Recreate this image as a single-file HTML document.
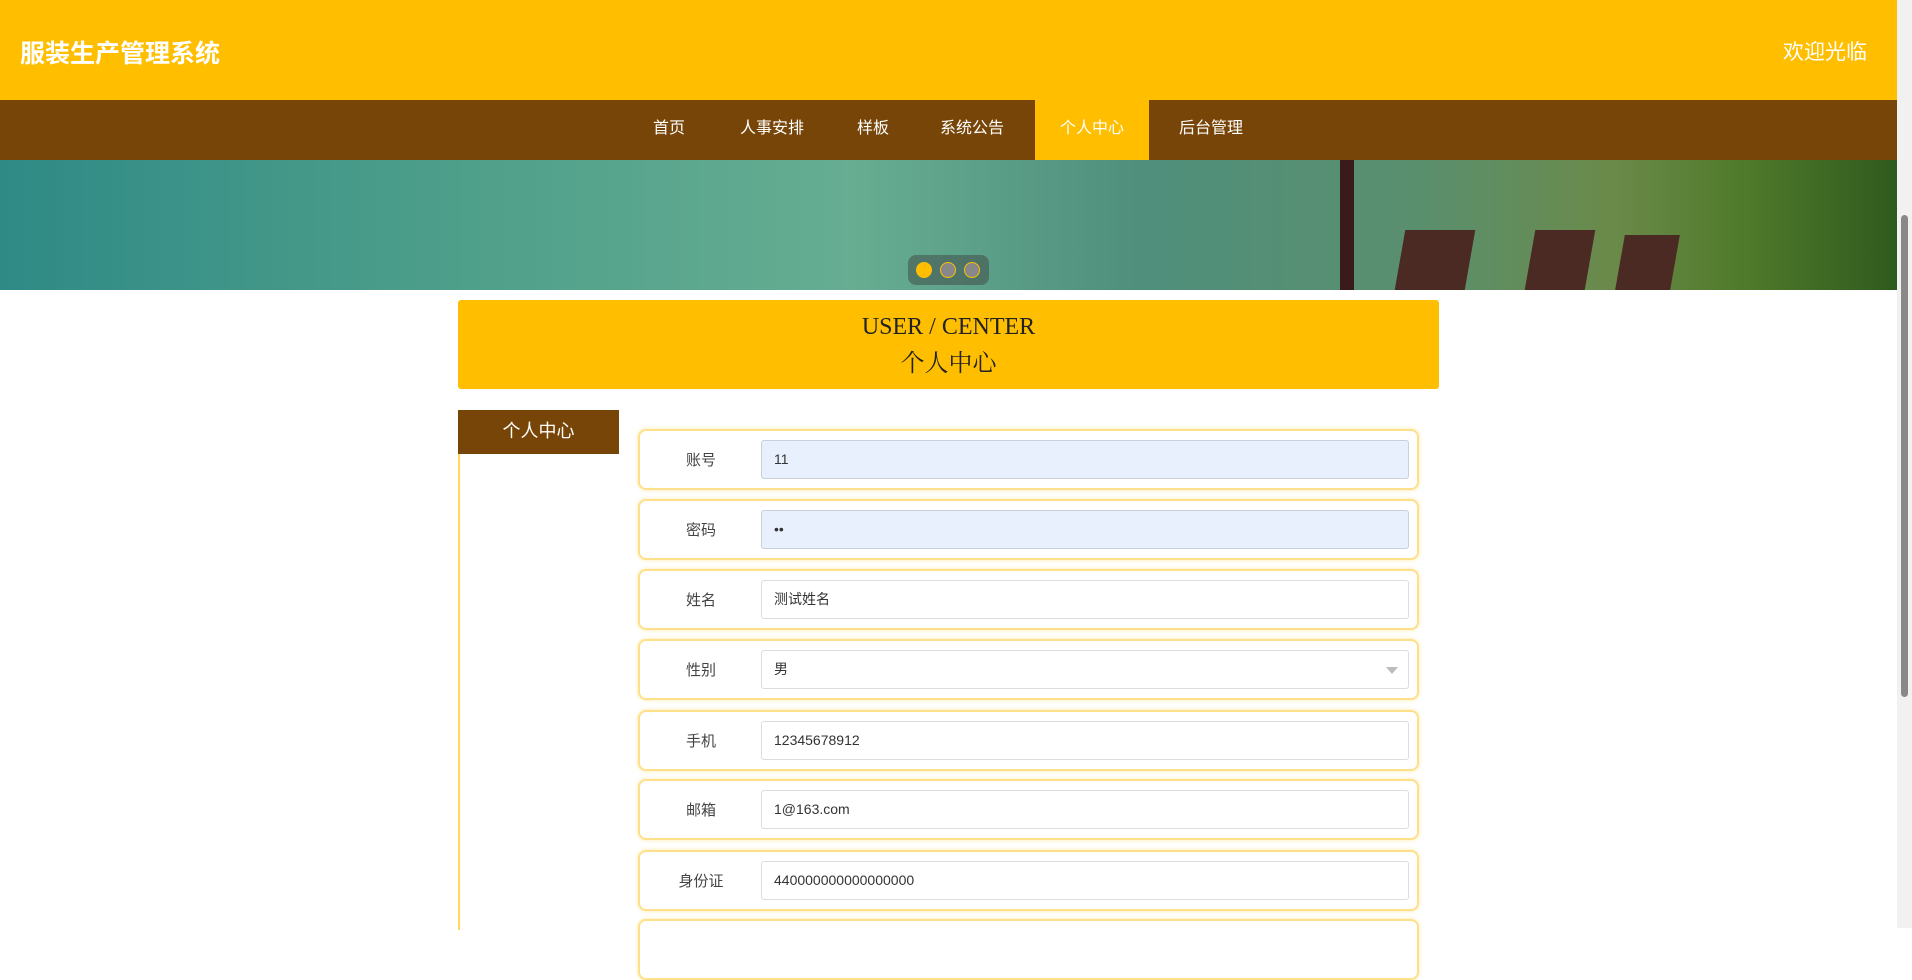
<!DOCTYPE html>
<html><head><meta charset="utf-8"><style>
*{margin:0;padding:0;box-sizing:border-box}
body{width:1912px;height:928px;overflow:hidden;background:#fff;font-family:"Liberation Sans","Noto Sans CJK SC",sans-serif;position:relative}
.hdr{position:absolute;left:0;top:0;width:1897px;height:100px;background:#FFBF00;color:#fff}
.hdr .t{position:absolute;left:20px;top:34px;font-size:25px;font-weight:bold}
.hdr .w{position:absolute;right:30px;top:36px;font-size:21px}
.nav{position:absolute;left:0;top:100px;width:1897px;height:60px;background:#774508}
.nav span{position:absolute;top:0;height:60px;line-height:58px;color:#fff;font-size:16px;transform:translateX(-50%)}
.nav .act{background:#FFBF00;width:114px;text-align:center;transform:none}
.ban{position:absolute;left:0;top:160px;width:1897px;height:130px;background:linear-gradient(90deg,#2f8a86 0%,#4fa08a 25%,#66ad92 45%,#4f8f7c 60%,#5a8f6e 75%,#6b8a4a 85%,#4f7a2a 92%,#2f5a1e 100%);overflow:hidden}
.dots{position:absolute;left:908px;top:255px;width:81px;height:30px;background:rgba(60,60,60,.45);border-radius:8px}
.dots i{position:absolute;top:7px;width:16px;height:16px;border-radius:50%;background:#888;border:1px solid #FFBF00}
.ttl{position:absolute;left:458px;top:300px;width:981px;height:89px;background:#FFBF00;border-radius:3px;text-align:center;font-family:"Liberation Serif","Noto Serif CJK SC",serif;color:#222}
.side{position:absolute;left:458px;top:410px;width:161px;height:520px;border-left:2px solid #FFD75a}
.side .h{height:44px;background:#774508;color:#fff;font-size:18px;text-align:center;line-height:42px;margin-left:-2px}
.row{position:absolute;left:638px;width:781px;height:61px;border:2px solid #FFE08a;border-radius:8px;box-shadow:0 0 4px #FFE9a8;background:#fff}
.row .l{position:absolute;left:0;width:122px;text-align:center;top:18px;font-size:15px;color:#444}
.row .i{position:absolute;left:121px;top:9px;width:648px;height:39px;border:1px solid #ddd;border-radius:3px;font-size:14px;color:#333;line-height:37px;padding-left:12px}
.row .i.b{background:#E8F0FE;border-color:#c8d0da}
.sb{position:absolute;left:1897px;top:0;width:15px;height:928px;background:#f1f1f1}
.sb i{position:absolute;left:4px;top:215px;width:7px;height:482px;background:#888;border-radius:4px}
</style></head><body>
<div class="hdr"><div class="t">服装生产管理系统</div><div class="w">欢迎光临</div></div>
<div class="nav">
<span style="left:669px">首页</span><span style="left:772px">人事安排</span><span style="left:873px">样板</span><span style="left:972px">系统公告</span><span class="act" style="left:1035px">个人中心</span><span style="left:1211px">后台管理</span>
</div>
<div class="ban">
<div style="position:absolute;left:1340px;top:0;width:14px;height:130px;background:#3a1a1a"></div>
<div style="position:absolute;left:1400px;top:70px;width:70px;height:60px;background:#4a2a22;transform:skewX(-10deg)"></div>
<div style="position:absolute;left:1530px;top:70px;width:60px;height:60px;background:#4a2a22;transform:skewX(-10deg)"></div>
<div style="position:absolute;left:1620px;top:75px;width:55px;height:55px;background:#4a2a22;transform:skewX(-10deg)"></div>
</div>
<div class="dots"><i style="left:8px;background:#FFBF00"></i><i style="left:32px"></i><i style="left:56px"></i></div>
<div class="ttl"><div style="font-size:24px;padding-top:14px">USER / CENTER</div><div style="font-size:24px;margin-top:2px">个人中心</div></div>
<div class="side"><div class="h">个人中心</div></div>
<div class="row" style="top:429px"><div class="l">账号</div><div class="i b">11</div></div>
<div class="row" style="top:499px"><div class="l">密码</div><div class="i b">••</div></div>
<div class="row" style="top:569px"><div class="l">姓名</div><div class="i">测试姓名</div></div>
<div class="row" style="top:639px"><div class="l">性别</div><div class="i">男<span style="position:absolute;right:10px;top:16px;border:6px solid transparent;border-top:7px solid #bbb"></span></div></div>
<div class="row" style="top:710px"><div class="l">手机</div><div class="i">12345678912</div></div>
<div class="row" style="top:779px"><div class="l">邮箱</div><div class="i">1@163.com</div></div>
<div class="row" style="top:850px"><div class="l">身份证</div><div class="i">440000000000000000</div></div>
<div class="row" style="top:919px"></div>
<div class="sb"><i></i></div>
</body></html>
